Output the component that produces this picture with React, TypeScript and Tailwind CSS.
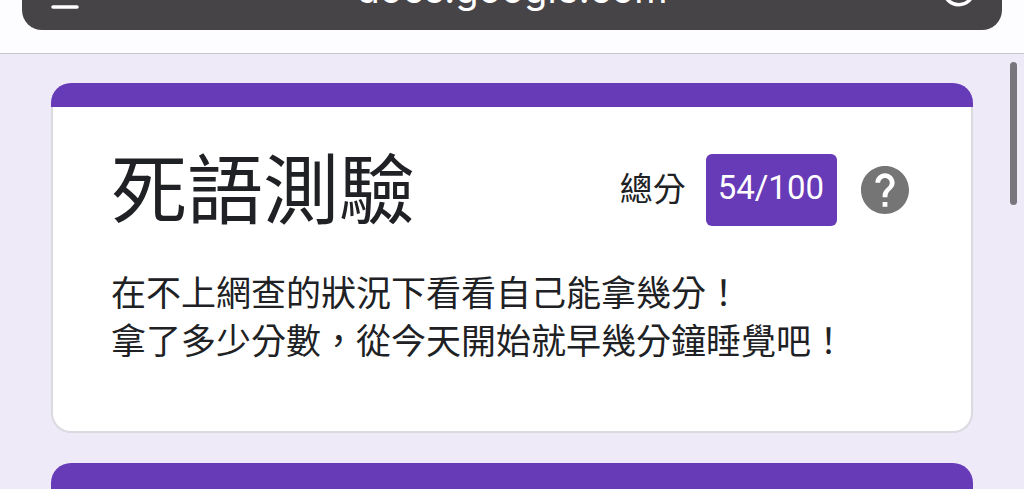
import React from "react";

function AddressBar() {
  return (
    <header className="border-b border-[#c8c4d2] bg-[#fdfcff] px-[22px] pb-[23px]">
      <div className="flex h-[30px] items-end justify-between overflow-hidden rounded-b-[20px] bg-[#474447] pr-[25px] pl-[29px] text-white">
        <button type="button" aria-label="Page menu" className="pb-[21px]">
          <svg viewBox="0 0 28 24" className="h-6 w-7" stroke="currentColor" strokeWidth="3.5" strokeLinecap="round">
            <path d="M2 2.2h24M2 12h24M2 22h24" />
          </svg>
        </button>
        <a href="#top" className="pb-[18px] pl-[2px] font-['Inter',sans-serif] text-[38px] leading-[46px]">
          docs.google.com
        </a>
        <button type="button" aria-label="Reload" className="pb-[23px]">
          <svg viewBox="0 0 34 34" className="size-[34px]" fill="none" stroke="currentColor" strokeWidth="3.5" strokeLinecap="round">
            <path d="M30 12A15 15 0 1 1 20 2.3" />
          </svg>
        </button>
      </div>
    </header>
  );
}

function HelpIcon() {
  return (
    <svg viewBox="2 2 20 20" className="size-12" fill="currentColor" aria-hidden="true">
      <path d="M12 2C6.48 2 2 6.48 2 12s4.48 10 10 10 10-4.48 10-10S17.52 2 12 2zm1 17h-2v-2h2v2zm2.07-7.75l-.9.92C13.45 12.9 13 13.5 13 15h-2v-.5c0-1.1.45-2.1 1.17-2.83l1.24-1.26c.37-.36.59-.86.59-1.41 0-1.1-.9-2-2-2s-2 .9-2 2H8c0-2.21 1.79-4 4-4s4 1.79 4 4c0 .88-.36 1.68-.93 2.25z" />
    </svg>
  );
}

export default function App() {
  return (
    <div className="h-screen overflow-hidden bg-[#eeeaf8] font-['Roboto','Noto_Sans_CJK_TC',sans-serif] text-[#202124]">
      <AddressBar />
      <main className="relative px-[51px] pt-[29px]">
        <div className="absolute top-2 right-[7px] h-[143px] w-[7px] rounded-full bg-[#78757c]" />
        <section>
          <div className="h-6 rounded-t-[20px] bg-[#673ab7]" />
          <div className="rounded-b-[20px] border-2 border-t-0 border-[#dadae0] bg-white px-[58px] pt-[34px] pb-[64px]">
            <div className="flex items-center justify-between">
              <h1 className="pt-1 text-[76px] leading-[94px]">死語測驗</h1>
              <div className="flex items-center pr-1">
                <span className="pr-5 text-[33px] leading-[48px]">總分</span>
                <span className="rounded-md bg-[#673ab7] pt-3 pr-[13px] pb-4 pl-3 text-[33px] leading-[44px] text-white">54/100</span>
                <button type="button" aria-label="說明" className="ml-6 text-[#757575]">
                  <HelpIcon />
                </button>
              </div>
            </div>
            <p className="mt-8 text-[35px] leading-[48px]">
              在不上網查的狀況下看看自己能拿幾分！
              <br />
              拿了多少分數，從今天開始就早幾分鐘睡覺吧！
            </p>
          </div>
        </section>
        <section className="mt-[30px] h-20 rounded-t-[20px] bg-[#673ab7]" />
      </main>
    </div>
  );
}
